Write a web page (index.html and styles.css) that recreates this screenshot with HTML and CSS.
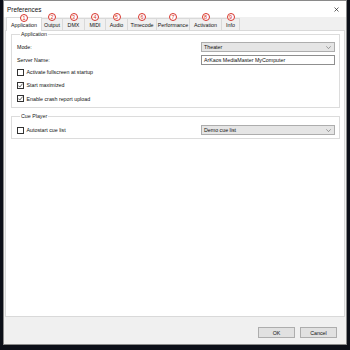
FILE: index.html
```html
<!DOCTYPE html>
<html lang="en">
<head>
<meta charset="UTF-8" />
<meta name="viewport" content="width=device-width, initial-scale=1" />
<title>Preferences</title>
<link rel="stylesheet" href="styles.css">
</head>
<body>

<div class="dialog">
  <div class="titlebar">
    <span class="title">Preferences</span>
    <svg class="close" width="5" height="5" viewBox="0 0 5 5"><path d="M0.5 0.5L4.5 4.5M4.5 0.5L0.5 4.5" /></svg>
  </div>

  <div class="frame">
    <div class="tabs">
      <div class="tab active"><span class="mark">1</span>Application</div>
      <div class="tab"><span class="mark">2</span>Output</div>
      <div class="tab"><span class="mark">3</span>DMX</div>
      <div class="tab"><span class="mark">4</span>MIDI</div>
      <div class="tab"><span class="mark">5</span>Audio</div>
      <div class="tab"><span class="mark">6</span>Timecode</div>
      <div class="tab"><span class="mark">7</span>Performance</div>
      <div class="tab"><span class="mark">8</span>Activation</div>
      <div class="tab"><span class="mark">9</span>Info</div>
    </div>

    <div class="panel">
      <fieldset class="group">
        <legend>Application</legend>
        <div class="row">
          <span>Mode:</span>
          <div class="select">Theater<svg width="5" height="3" viewBox="0 0 5 3"><path d="M0.3 0.3L2.5 2.6L4.7 0.3" /></svg></div>
        </div>
        <div class="row">
          <span>Server Name:</span>
          <div class="input">ArKaos MediaMaster MyComputer</div>
        </div>
        <div class="check first"><span class="box"></span>Activate fullscreen at startup</div>
        <div class="check"><span class="box"><svg width="5" height="5" viewBox="0 0 5 5"><path d="M0.4 2.6L1.8 4.1L4.6 0.6" /></svg></span>Start maximized</div>
        <div class="check"><span class="box"><svg width="5" height="5" viewBox="0 0 5 5"><path d="M0.4 2.6L1.8 4.1L4.6 0.6" /></svg></span>Enable crash report upload</div>
      </fieldset>

      <fieldset class="group cue">
        <legend>Cue Player</legend>
        <div class="row">
          <div class="check"><span class="box"></span>Autostart cue list</div>
          <div class="select">Demo cue list<svg width="5" height="3" viewBox="0 0 5 3"><path d="M0.3 0.3L2.5 2.6L4.7 0.3" /></svg></div>
        </div>
      </fieldset>
    </div>

    <div class="buttons">
      <button>OK</button>
      <button>Cancel</button>
    </div>
  </div>
</div>

</body>
</html>
```

FILE: styles.css
```css
body {
  margin: 0;
  background: #0c0f18;
  font-family: "Segoe UI", "Liberation Sans", Arial, sans-serif;
  font-size: 5.3px;
  color: #111;
}
.dialog {
  margin: 0 3px 0 3px;
  height: 345px;
  box-sizing: border-box;
  border: 1px solid #8a8a8a;
  background: #f0f0f0;
  display: flex;
  flex-direction: column;
}
.titlebar {
  height: 16px;
  background: #fff;
  display: flex;
  align-items: center;
  justify-content: space-between;
  padding: 0 7px 0 3px;
}
.title {
  font-size: 6.4px;
}
.close path {
  stroke: #222;
  stroke-width: 0.7;
  fill: none;
}
.frame {
  flex: 1;
  display: flex;
  flex-direction: column;
  padding: 0 1px;
}

/* fila de pestañas */
.tabs {
  height: 13px;
  display: grid;
  grid-template-columns: 33px 21px 22px 21px 22px 29px 33px 32px 18px;
  align-items: end;
  padding-left: 3px;
}
.tab {
  position: relative;
  height: 12px;
  box-sizing: border-box;
  border: 1px solid #d9d9d9;
  border-bottom: none;
  margin-right: -1px;
  background: #f0f0f0;
  display: flex;
  align-items: center;
  justify-content: center;
  padding-top: 1px;
  white-space: nowrap;
}
.tab.active {
  height: 14px;
  margin: 0 -1px -1px -2px;
  background: #fff;
  z-index: 1;
}
.mark {
  position: absolute;
  top: -6px;
  left: 50%;
  transform: translateX(-50%);
  width: 6px;
  height: 6px;
  border: 0.8px solid #d8342c;
  border-radius: 50%;
  background: #fff;
  color: #d8342c;
  font-size: 5.4px;
  line-height: 6px;
  text-align: center;
}
.tab.active .mark {
  top: -4px;
}

.panel {
  height: 287px;
  box-sizing: border-box;
  background: #fff;
  border: 1px solid #d9d9d9;
  padding: 0 4px 0 5px;
}
.group {
  margin: 0;
  border: 1px solid #dcdcdc;
  padding: 4px 4px 2px 5px;
  min-inline-size: 0;
}
.group legend {
  margin-left: 3px;
  padding: 0 1px;
  line-height: 7px;
  color: #222;
}
.group.cue {
  margin-top: 5px;
  padding-top: 5px;
  padding-bottom: 3px;
}
.row {
  display: grid;
  grid-template-columns: 1fr 134px;
  align-items: center;
  height: 10px;
}
.row + .row {
  margin-top: 2.5px;
}
.select {
  height: 10px;
  box-sizing: border-box;
  background: #e5e5e5;
  border: 1px solid #adadad;
  display: flex;
  align-items: center;
  justify-content: space-between;
  padding: 0 3px 0 2px;
}
.select path {
  stroke: #666;
  stroke-width: 0.6;
  fill: none;
}
.input {
  height: 10px;
  box-sizing: border-box;
  background: #fff;
  border: 1px solid #8f8f8f;
  display: flex;
  align-items: center;
  padding-left: 2px;
}
.check {
  display: flex;
  align-items: center;
  height: 13.3px;
}
.check.first {
  margin-top: 1px;
}
.row .check {
  height: 10px;
}
.box {
  width: 7px;
  height: 7px;
  box-sizing: border-box;
  border: 1px solid #333;
  background: #fff;
  margin-right: 2.5px;
  display: flex;
  align-items: center;
  justify-content: center;
}
.box path {
  stroke: #222;
  stroke-width: 0.7;
  fill: none;
}

.buttons {
  flex: 1;
  display: flex;
  justify-content: flex-end;
  align-items: flex-start;
  gap: 5px;
  padding: 10px 8px 0 0;
}
.buttons button {
  width: 37px;
  height: 11px;
  padding: 0;
  background: #e1e1e1;
  border: 1px solid #adadad;
  font-family: inherit;
  font-size: 5.3px;
  color: #111;
}
```
